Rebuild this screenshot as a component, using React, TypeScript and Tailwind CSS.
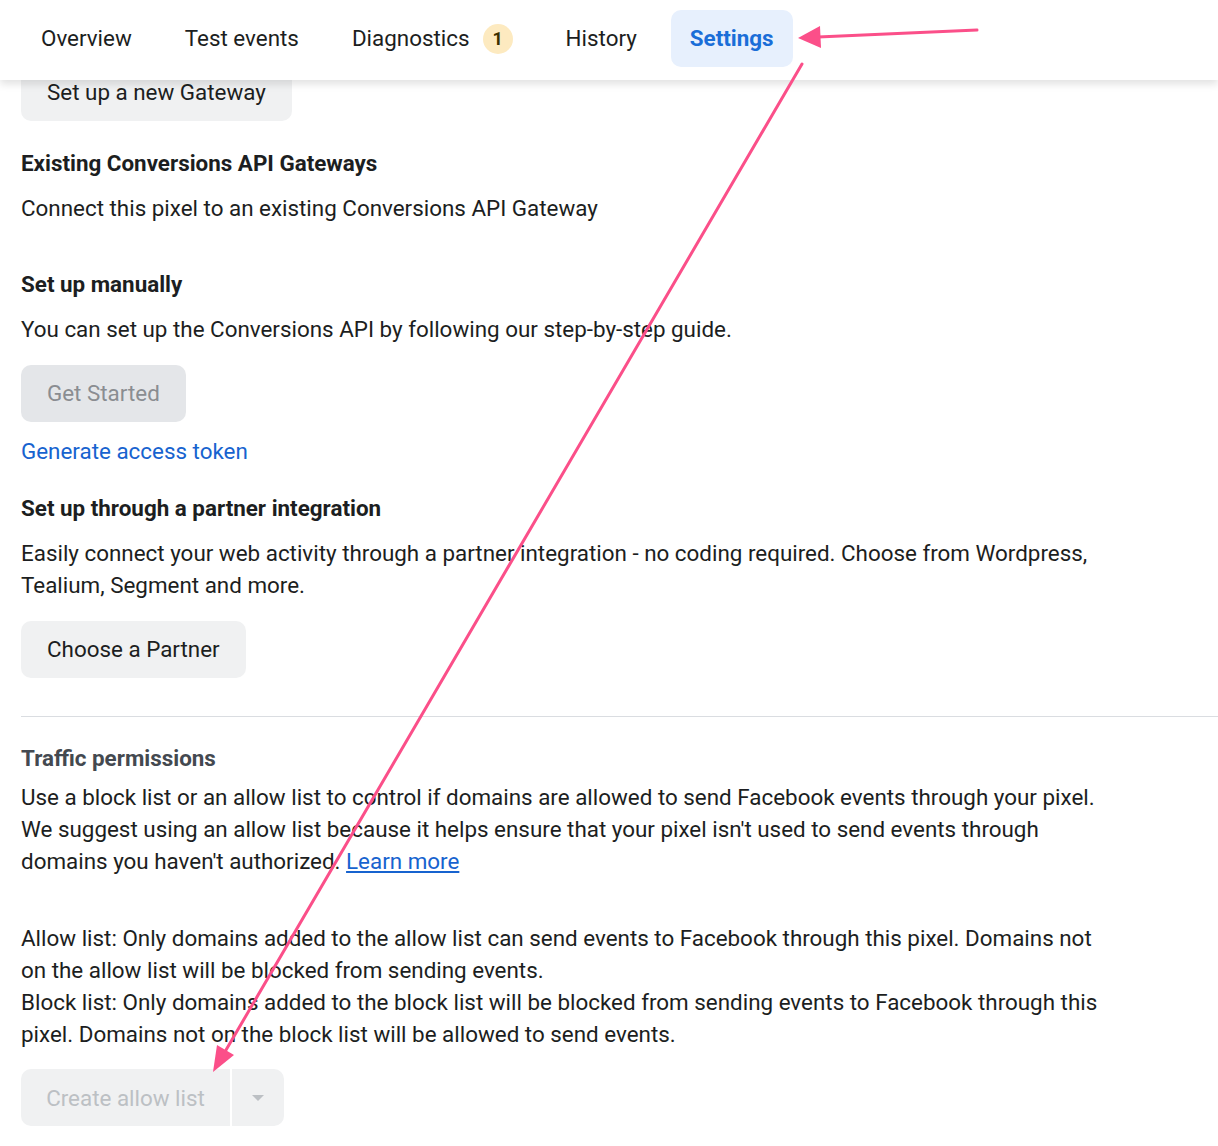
import React from 'react';

const tabs = ['Overview', 'Test events', 'Diagnostics', 'History', 'Settings'];

const GrayButton: React.FC<{ label: string; muted?: boolean; dark?: boolean }> = ({ label, muted, dark }) => (
  <button
    className={`h-[57px] px-[26px] rounded-[10px] text-[22.4px] leading-none ${dark ? 'bg-[#e4e6e9]' : 'bg-[#f0f1f2]'} ${muted ? 'text-[#8a8d91]' : 'text-[#1c1e21]'}`}
  >
    {label}
  </button>
);

const App: React.FC = () => {
  return (
    <div className="relative w-full h-[1146px] overflow-hidden bg-white font-['Roboto','Liberation_Sans',sans-serif] text-[#1c1e21]">
      {/* top tab bar, lies over scrolled content */}
      <div className="absolute top-0 left-0 right-0 h-[80px] bg-white z-10 shadow-[0_4px_8px_rgba(0,0,0,0.12)] flex items-start pt-[10px] pl-[22px] gap-[15px]">
        {tabs.map((t) => {
          const active = t === 'Settings';
          return (
            <div
              key={t}
              className={`h-[57px] px-[19px] flex items-center rounded-[10px] text-[22.4px] ${active ? 'bg-[#e7f0fd] text-[#1a6ed8] font-bold' : 'text-[#1c1e21]'}`}
            >
              {t}
              {t === 'Diagnostics' && (
                <span className="ml-[13px] w-[30px] h-[30px] rounded-full bg-[#fdeac0] flex items-center justify-center text-[18px] font-bold text-[#3a3000]">
                  1
                </span>
              )}
            </div>
          );
        })}
      </div>

      <div className="pt-[64px] px-[21px] text-[22.4px] leading-[32px]">
        <GrayButton label="Set up a new Gateway" />

        <h3 className="mt-[26px] font-bold">Existing Conversions API Gateways</h3>
        <p className="mt-[13px]">Connect this pixel to an existing Conversions API Gateway</p>

        <h3 className="mt-[44px] font-bold">Set up manually</h3>
        <p className="mt-[13px]">You can set up the Conversions API by following our step-by-step guide.</p>
        <div className="mt-[20px]">
          <GrayButton label="Get Started" muted dark />
        </div>
        <a className="block mt-[13px] text-[#1763cf]">Generate access token</a>

        <h3 className="mt-[25px] font-bold">Set up through a partner integration</h3>
        <p className="mt-[13px] max-w-[1085px]">
          Easily connect your web activity through a partner integration - no coding required. Choose from Wordpress, Tealium, Segment and more.
        </p>
        <div className="mt-[20px]">
          <GrayButton label="Choose a Partner" />
        </div>
      </div>

      <div className="ml-[21px] mt-[38px] border-t border-[#dadde1]" />

      <div className="px-[21px] text-[22.4px] leading-[32px]">
        <h3 className="mt-[25px] font-bold text-[#444950]">Traffic permissions</h3>
        <p className="mt-[7px] max-w-[1085px]">
          Use a block list or an allow list to control if domains are allowed to send Facebook events through your pixel. We suggest using an allow list because it helps ensure that your pixel isn't used to send events through domains you haven't authorized.{' '}
          <a className="text-[#1763cf] underline">Learn more</a>
        </p>
        <p className="mt-[45px] max-w-[1085px]">
          Allow list: Only domains added to the allow list can send events to Facebook through this pixel. Domains not on the allow list will be blocked from sending events.
          <br />
          Block list: Only domains added to the block list will be blocked from sending events to Facebook through this pixel. Domains not on the block list will be allowed to send events.
        </p>
        <div className="mt-[19px] flex gap-[2px]">
          <button className="h-[57px] w-[209px] rounded-l-[10px] bg-[#f0f1f2] text-[22.4px] text-[#bcc0c4]">Create allow list</button>
          <button className="h-[57px] w-[52px] rounded-r-[10px] bg-[#f0f1f2] flex items-center justify-center">
            <svg width="14" height="8" viewBox="0 0 14 8">
              <path d="M1 1 L7 7 L13 1 Z" fill="#bcc0c4" />
            </svg>
          </button>
        </div>
      </div>

      {/* annotation arrows */}
      <svg className="absolute inset-0 z-20 pointer-events-none" width="1218" height="1146" viewBox="0 0 1218 1146">
        <line x1="977" y1="30" x2="818" y2="37" stroke="#fb4f89" strokeWidth="3" strokeLinecap="round" />
        <polygon points="798,38 820,26 821,48" fill="#fb4f89" />
        <line x1="802" y1="64" x2="226" y2="1050" stroke="#fb4f89" strokeWidth="3" strokeLinecap="round" />
        <polygon points="213,1072 217,1045 234,1055" fill="#fb4f89" />
      </svg>
    </div>
  );
};

export default App;
